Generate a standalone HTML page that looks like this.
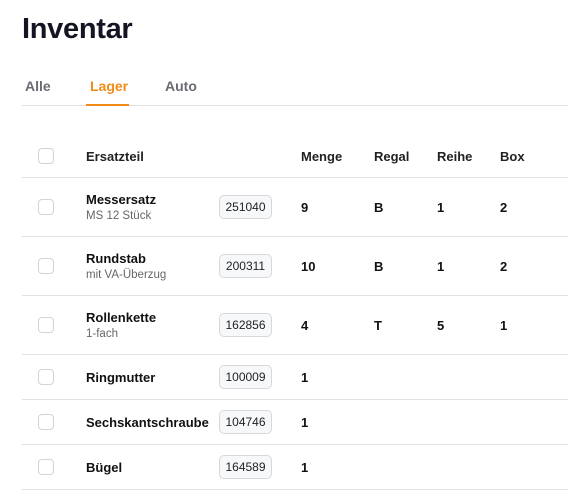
<!DOCTYPE html><html><head><style>
body{margin:0;width:568px;height:493px;background:#fff;font-family:"Liberation Sans",sans-serif;color:#111;position:relative;overflow:hidden}
.a{position:absolute;white-space:nowrap}
h1{position:absolute;left:22px;top:13px;margin:0;font-size:29px;font-weight:bold;color:#141422;letter-spacing:-0.3px}
.tab{position:absolute;top:78px;font-size:14px;font-weight:bold;color:#6b6b73}
.line{position:absolute;left:22px;right:0;height:1px;background:#e2e2e6}
.cb{position:absolute;left:38px;width:14px;height:14px;border:1px solid #d3d3d8;border-radius:4px;background:#fff}
.b{font-size:13px;font-weight:bold;color:#111}
.s{font-size:11.5px;color:#666}
.badge{position:absolute;left:219px;width:51px;height:22px;border:1px solid #d8d8dc;border-radius:5px;background:#f7f8fa;font-size:12px;color:#222;text-align:center;line-height:22px}
.h{font-size:13px;color:#222;font-weight:bold;top:149px}
</style></head><body>
<h1>Inventar</h1>
<div class="tab" style="left:25px">Alle</div>
<div class="tab" style="left:90px;color:#f28c18">Lager</div>
<div class="tab" style="left:165px">Auto</div>
<div class="line" style="top:105px"></div>
<div style="position:absolute;left:86px;top:104px;width:43px;height:2px;background:#f28c18"></div>

<div class="cb" style="top:148px"></div>
<div class="a h" style="left:86px">Ersatzteil</div>
<div class="a h" style="left:301px">Menge</div>
<div class="a h" style="left:374px">Regal</div>
<div class="a h" style="left:437px">Reihe</div>
<div class="a h" style="left:500px">Box</div>
<div class="line" style="top:177px"></div>

<div class="cb" style="top:199px"></div>
<div class="a b" style="left:86px;top:192px">Messersatz</div>
<div class="a s" style="left:86px;top:210px">MS 12 Stück</div>
<div class="badge" style="top:195px">251040</div>
<div class="a b" style="left:301px;top:200px">9</div><div class="a b" style="left:374px;top:200px">B</div><div class="a b" style="left:437px;top:200px">1</div><div class="a b" style="left:500px;top:200px">2</div>
<div class="line" style="top:236px"></div>

<div class="cb" style="top:258px"></div>
<div class="a b" style="left:86px;top:251px">Rundstab</div>
<div class="a s" style="left:86px;top:269px">mit VA-Überzug</div>
<div class="badge" style="top:254px">200311</div>
<div class="a b" style="left:301px;top:259px">10</div><div class="a b" style="left:374px;top:259px">B</div><div class="a b" style="left:437px;top:259px">1</div><div class="a b" style="left:500px;top:259px">2</div>
<div class="line" style="top:295px"></div>

<div class="cb" style="top:317px"></div>
<div class="a b" style="left:86px;top:310px">Rollenkette</div>
<div class="a s" style="left:86px;top:328px">1-fach</div>
<div class="badge" style="top:313px">162856</div>
<div class="a b" style="left:301px;top:318px">4</div><div class="a b" style="left:374px;top:318px">T</div><div class="a b" style="left:437px;top:318px">5</div><div class="a b" style="left:500px;top:318px">1</div>
<div class="line" style="top:354px"></div>

<div class="cb" style="top:369px"></div>
<div class="a b" style="left:86px;top:370px">Ringmutter</div>
<div class="badge" style="top:365px">100009</div>
<div class="a b" style="left:301px;top:370px">1</div>
<div class="line" style="top:399px"></div>

<div class="cb" style="top:414px"></div>
<div class="a b" style="left:86px;top:415px">Sechskantschraube</div>
<div class="badge" style="top:410px">104746</div>
<div class="a b" style="left:301px;top:415px">1</div>
<div class="line" style="top:444px"></div>

<div class="cb" style="top:459px"></div>
<div class="a b" style="left:86px;top:460px">Bügel</div>
<div class="badge" style="top:455px">164589</div>
<div class="a b" style="left:301px;top:460px">1</div>
<div class="line" style="top:489px"></div>
</body></html>
